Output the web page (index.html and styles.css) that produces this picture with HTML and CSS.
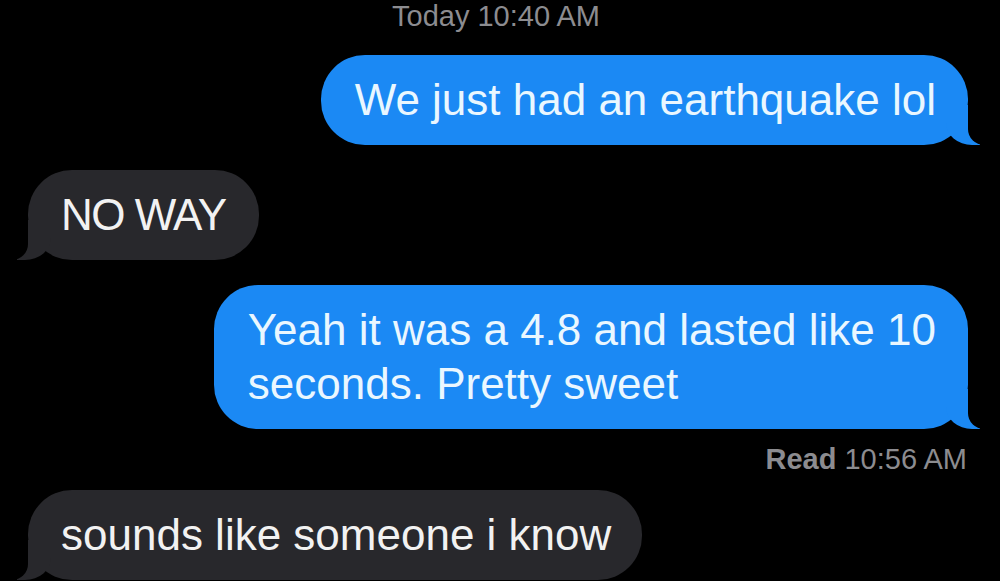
FILE: index.html
```html
<!DOCTYPE html>
<html lang="en">
<head>
<meta charset="utf-8">
<title>Messages</title>
<link rel="stylesheet" href="styles.css">
</head>
<body>
<main class="thread">
  <div class="stamp"><span class="stamp-day">Today</span> 10:40 AM</div>
  <div class="row row-sent first">
    <div class="bubble sent">We just had an earthquake lol</div>
  </div>
  <div class="row row-recv">
    <div class="bubble recv caps">NO WAY</div>
  </div>
  <div class="row row-sent">
    <div class="bubble sent wide">Yeah it was a 4.8 and lasted like 10<br>seconds. Pretty sweet</div>
  </div>
  <div class="receipt"><span class="receipt-label">Read</span> 10:56 AM</div>
  <div class="row row-recv">
    <div class="bubble recv">sounds like someone i know</div>
  </div>
</main>
</body>
</html>
```
FILE: styles.css
```css
html, body {
  margin: 0;
  padding: 0;
  background: #000;
  height: 100%;
  overflow: hidden;
}

.thread {
  display: flex;
  flex-direction: column;
  padding: 0 32px 0 28px;
  font-family: "Liberation Sans", Arial, sans-serif;
}

.stamp {
  text-align: center;
  color: #8c8c90;
  font-size: 29px;
  line-height: 30px;
  padding-top: 1px;
  margin-right: 4px;
}

.stamp-day {
  font-weight: 400;
}

.row {
  display: flex;
  margin-top: 25px;
}

.row.first {
  margin-top: 24px;
}

.row-sent {
  justify-content: flex-end;
}

.row-recv {
  justify-content: flex-start;
}

.bubble {
  position: relative;
  font-size: 44px;
  line-height: 54px;
  padding: 18px 32px 18px 34px;
  border-radius: 44px;
}

.sent {
  background: #1b89f4;
  color: #eaf7ff;
}

.recv {
  background: #28282c;
  color: #f2f2f2;
  padding: 18px 31px 18px 33px;
}

.caps {
  letter-spacing: -1.5px;
  padding-right: 33px;
}

.sent::before,
.sent::after,
.recv::before,
.recv::after {
  content: "";
  position: absolute;
  bottom: 0;
  height: 40px;
}

.sent::before {
  right: -12px;
  width: 34px;
  background: #1b89f4;
  border-bottom-left-radius: 26px 22px;
}

.sent::after {
  right: -44px;
  width: 44px;
  background: #000;
  border-bottom-left-radius: 16px;
}

.recv::before {
  left: -11px;
  width: 34px;
  background: #28282c;
  border-bottom-right-radius: 26px 22px;
}

.recv::after {
  left: -44px;
  width: 44px;
  background: #000;
  border-bottom-right-radius: 16px;
}

.receipt {
  text-align: right;
  color: #8c8c90;
  font-size: 29px;
  line-height: 30px;
  margin-top: 15px;
  margin-right: 1px;
}

.receipt-label {
  font-weight: 700;
}

.row-recv:last-child {
  margin-top: 16px;
}
```
